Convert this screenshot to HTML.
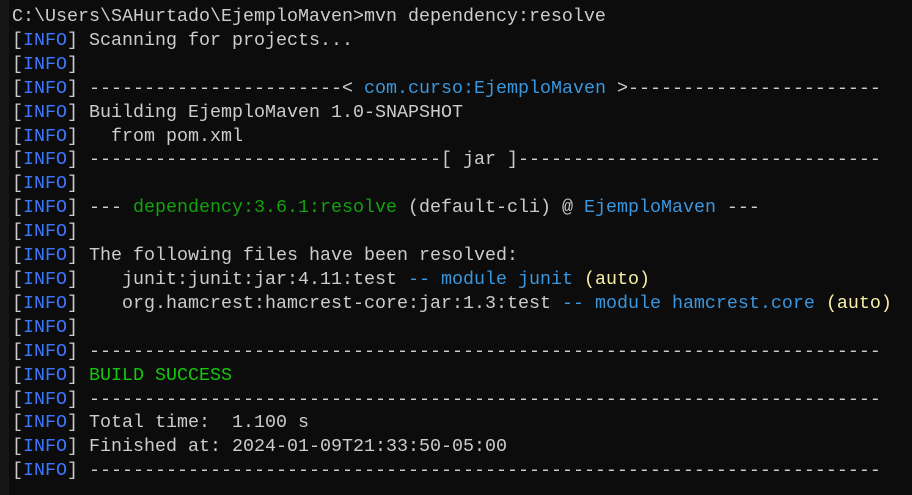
<!DOCTYPE html>
<html><head><meta charset="utf-8"><style>
html,body{margin:0;padding:0;background:#0c0c0c;width:912px;height:495px;overflow:hidden}
.strip{position:absolute;left:0;top:0;width:9px;height:495px;background:#161616}
pre{position:absolute;left:12px;top:5px;margin:0;font-family:"Liberation Mono",monospace;font-size:18.33px;line-height:23.9px;color:#cccccc;white-space:pre}
.b{color:#3b78ff}.c{color:#3a96dd}.g{color:#13a10e}.gs{color:#16c60c}.y{color:#f9f1a5}
</style></head><body><div class="strip"></div><pre>C:\Users\SAHurtado\EjemploMaven&gt;mvn dependency:resolve
[<span class="b">INFO</span>] Scanning for projects...
[<span class="b">INFO</span>]
[<span class="b">INFO</span>] -----------------------&lt; <span class="c">com.curso:EjemploMaven</span> &gt;-----------------------
[<span class="b">INFO</span>] Building EjemploMaven 1.0-SNAPSHOT
[<span class="b">INFO</span>]   from pom.xml
[<span class="b">INFO</span>] --------------------------------[ jar ]---------------------------------
[<span class="b">INFO</span>]
[<span class="b">INFO</span>] --- <span class="g">dependency:3.6.1:resolve</span> (default-cli) @ <span class="c">EjemploMaven</span> ---
[<span class="b">INFO</span>]
[<span class="b">INFO</span>] The following files have been resolved:
[<span class="b">INFO</span>]    junit:junit:jar:4.11:test <span class="c">-- module junit</span> <span class="y">(auto)</span>
[<span class="b">INFO</span>]    org.hamcrest:hamcrest-core:jar:1.3:test <span class="c">-- module hamcrest.core</span> <span class="y">(auto)</span>
[<span class="b">INFO</span>]
[<span class="b">INFO</span>] ------------------------------------------------------------------------
[<span class="b">INFO</span>] <span class="gs">BUILD SUCCESS</span>
[<span class="b">INFO</span>] ------------------------------------------------------------------------
[<span class="b">INFO</span>] Total time:  1.100 s
[<span class="b">INFO</span>] Finished at: 2024-01-09T21:33:50-05:00
[<span class="b">INFO</span>] ------------------------------------------------------------------------</pre></body></html>
